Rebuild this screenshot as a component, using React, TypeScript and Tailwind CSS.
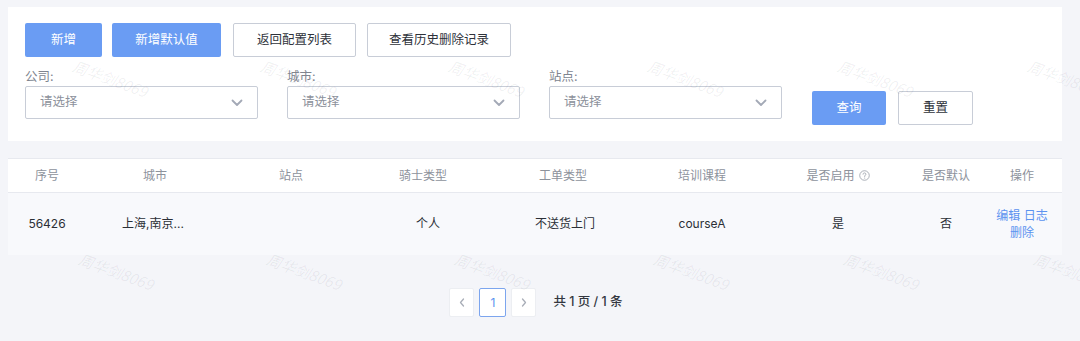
import React from "react";

const FONT = { fontFamily: '"Inter", "Noto Sans CJK SC", "Noto Sans", sans-serif' };

function Chevron() {
  return (
    <svg width="12" height="8" viewBox="0 0 12 8" fill="none">
      <path d="M1.5 1.5 L6 6 L10.5 1.5" stroke="#a3a9b6" strokeWidth="1.8" strokeLinecap="round" strokeLinejoin="round" />
    </svg>
  );
}

function Select({ label }: { label: string }) {
  return (
    <div className="flex flex-col w-[233px]">
      <div className="text-[12.5px] leading-[16px] text-[#80858f] h-[16px]">{label}</div>
      <div className="mt-[1px] h-[33px] border border-[#c8cdd7] rounded-[2px] bg-white flex items-center justify-between pl-[14px] pr-[14px]">
        <span className="text-[12.5px] text-[#8c919b]">请选择</span>
        <Chevron />
      </div>
    </div>
  );
}

const cols = [
  { w: "w-[78px]", h: "序号" },
  { w: "w-[138px]", h: "城市" },
  { w: "w-[134px]", h: "站点" },
  { w: "w-[130px]", h: "骑士类型" },
  { w: "w-[150px]", h: "工单类型" },
  { w: "w-[128px]", h: "培训课程" },
  { w: "w-[144px]", h: "是否启用" },
  { w: "w-[72px]", h: "是否默认" },
  { w: "w-[80px]", h: "操作" },
];

function Watermarks() {
  const xs = [77, 265, 453, 652, 842, 1032];
  const ys = [55, 248];
  return (
    <div className="absolute inset-0 pointer-events-none overflow-hidden">
      {ys.map((y, i) =>
        xs.map((x, j) => (
          <div
            key={`${i}-${j}`}
            className="absolute italic text-[15px] text-[rgba(40,50,70,0.07)] rotate-[20deg] origin-top-left whitespace-nowrap"
            style={{ left: x + (i === 1 ? 6 : 0), top: y, fontFamily: '"Noto Sans CJK SC", sans-serif' }}
          >
            周华剑8069
          </div>
        ))
      )}
    </div>
  );
}

export default function App() {
  return (
    <div className="relative w-[1080px] h-[341px] bg-[#f4f5f9] overflow-hidden" style={FONT}>
      <div className="pt-[7px] pl-[8px] w-[1062px]">
        {/* Filter card */}
        <div className="bg-white h-[134px] pl-[17px] pt-[16px]">
          <div className="flex items-center">
            <div className="w-[77px] h-[34px] rounded-[2px] bg-[#6a9cf3] text-white text-[12.5px] flex items-center justify-center">新增</div>
            <div className="ml-[10px] w-[109px] h-[34px] rounded-[2px] bg-[#6a9cf3] text-white text-[12.5px] flex items-center justify-center">新增默认值</div>
            <div className="ml-[12px] w-[123px] h-[34px] rounded-[2px] border border-[#c8cdd7] text-[#2e323a] text-[12.5px] flex items-center justify-center">返回配置列表</div>
            <div className="ml-[11px] w-[144px] h-[34px] rounded-[2px] border border-[#c8cdd7] text-[#2e323a] text-[12.5px] flex items-center justify-center">查看历史删除记录</div>
          </div>
          <div className="flex items-start mt-[12px]">
            <Select label="公司:" />
            <div className="ml-[29px]"><Select label="城市:" /></div>
            <div className="ml-[29px]"><Select label="站点:" /></div>
            <div className="ml-[30px] mt-[22px] w-[74px] h-[34px] rounded-[2px] bg-[#6a9cf3] text-white text-[12.5px] flex items-center justify-center">查询</div>
            <div className="ml-[12px] mt-[22px] w-[75px] h-[34px] rounded-[2px] border border-[#c8cdd7] text-[#2e323a] text-[12.5px] flex items-center justify-center">重置</div>
          </div>
        </div>

        {/* Table */}
        <div className="mt-[17px]">
          <div className="flex h-[35px] bg-white border-t border-b border-[#e7e9ef] items-center">
            {cols.map((c, i) => (
              <div key={i} className={`${c.w} text-center text-[12px] text-[#8d929c] flex items-center justify-center`}>
                {c.h}
                {i === 6 && (
                  <svg className="ml-[4px]" width="11" height="11" viewBox="0 0 12 12" fill="none">
                    <circle cx="6" cy="6" r="5.2" stroke="#9aa0aa" strokeWidth="0.9" />
                    <path d="M4.4 4.6 C4.4 3.7 5.1 3.2 6 3.2 C6.9 3.2 7.6 3.8 7.6 4.6 C7.6 5.5 6.4 5.7 6.2 6.5 L6.2 7.1" stroke="#9aa0aa" strokeWidth="0.9" strokeLinecap="round" />
                    <circle cx="6.2" cy="8.7" r="0.6" fill="#9aa0aa" />
                  </svg>
                )}
              </div>
            ))}
          </div>
          <div className="flex h-[62px] bg-[#f8f9fc] items-center text-[12px] text-[#2b2f36]">
            <div className="w-[78px] text-center">56426</div>
            <div className="w-[138px] text-center pr-[4px]">上海,南京...</div>
            <div className="w-[134px]"></div>
            <div className="w-[130px] text-center pl-[10px]">个人</div>
            <div className="w-[150px] text-center pl-[4px]">不送货上门</div>
            <div className="w-[128px] text-center">courseA</div>
            <div className="w-[144px] text-center">是</div>
            <div className="w-[72px] text-center">否</div>
            <div className="w-[80px] text-center text-[#5b93f0] leading-[17px]">
              <div>编辑 日志</div>
              <div>删除</div>
            </div>
          </div>
        </div>
      </div>

      {/* Pagination */}
      <div className="flex justify-center items-center mt-[33px] pr-[8px]">
        <div className="w-[25px] h-[29px] bg-white border border-[#eceef2] rounded-[2px] flex items-center justify-center">
          <svg width="6" height="9" viewBox="0 0 6 9"><path d="M4.5 1 L1.5 4.5 L4.5 8" stroke="#a9aeb8" strokeWidth="1.3" fill="none" strokeLinecap="round" strokeLinejoin="round" /></svg>
        </div>
        <div className="ml-[5px] w-[27px] h-[29px] bg-white border border-[#7ca5ee] rounded-[2px] flex items-center justify-center text-[12px] text-[#5b93f0]">1</div>
        <div className="ml-[5px] w-[25px] h-[29px] bg-white border border-[#eceef2] rounded-[2px] flex items-center justify-center">
          <svg width="6" height="9" viewBox="0 0 6 9"><path d="M1.5 1 L4.5 4.5 L1.5 8" stroke="#a9aeb8" strokeWidth="1.3" fill="none" strokeLinecap="round" strokeLinejoin="round" /></svg>
        </div>
        <div className="ml-[17px] text-[12.5px] text-[#33373f] font-medium whitespace-pre">共 1 页 / 1 条</div>
      </div>

      <Watermarks />
    </div>
  );
}
